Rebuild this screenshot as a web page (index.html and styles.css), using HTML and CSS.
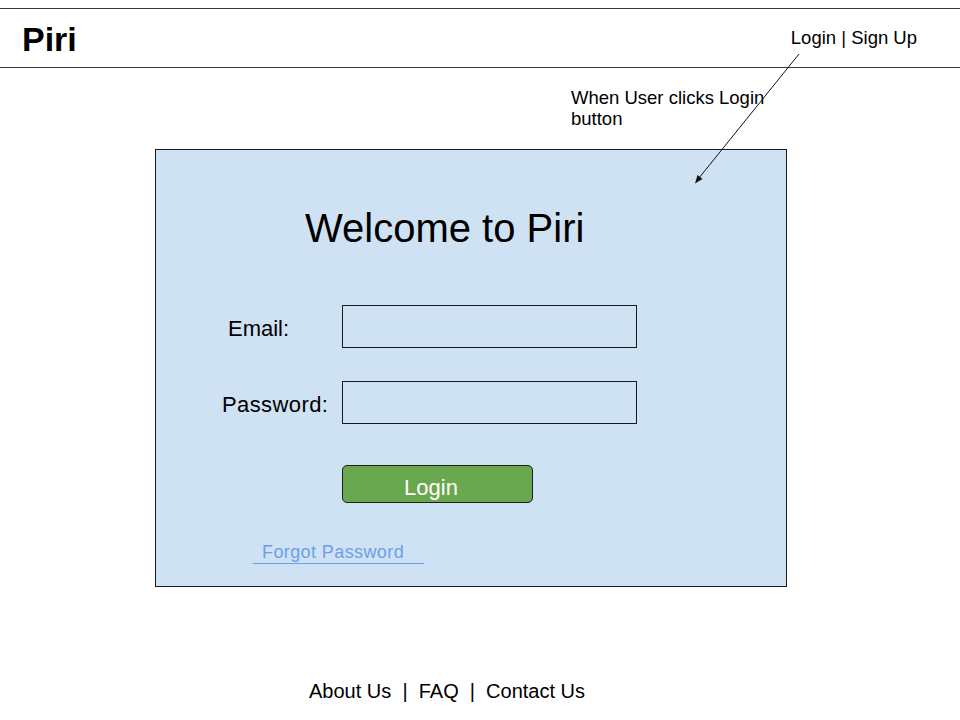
FILE: index.html
```html
<!DOCTYPE html>
<html lang="en">
<head>
<meta charset="utf-8">
<title>Piri - Login</title>
<link rel="stylesheet" href="styles.css">
</head>
<body>
<header class="topbar">
  <div class="brand">Piri</div>
  <nav class="auth-links">Login | Sign Up</nav>
</header>

<p class="annotation">When User clicks Login<br>button</p>

<main class="panel">
  <h1 class="panel-title">Welcome to Piri</h1>
  <form class="login-form">
    <label class="field-label field-label--email" for="email">Email:</label>
    <input class="field-input" id="email" type="email">
    <label class="field-label field-label--password" for="password">Password:</label>
    <input class="field-input" id="password" type="password">
    <button class="login-button" type="button">Login</button>
  </form>
  <a class="forgot-link" href="#">Forgot Password</a>
</main>

<footer class="site-footer">About Us  |  FAQ  |  Contact Us</footer>

<svg class="annotation-arrow" width="960" height="720" viewBox="0 0 960 720" aria-hidden="true">
  <line x1="799" y1="54" x2="699" y2="178" stroke="#111" stroke-width="1"/>
  <polygon points="695,183.5 702.5,179 697.5,175" fill="#111"/>
</svg>
</body>
</html>
```

FILE: styles.css
```css
* {
  box-sizing: border-box;
}

html, body {
  margin: 0;
  padding: 0;
  background: #ffffff;
}

body {
  position: relative;
  width: 960px;
  min-height: 720px;
  font-family: "Liberation Sans", Arial, sans-serif;
  color: #000;
}

.topbar {
  margin-top: 8px;
  height: 60px;
  border-top: 1px solid #3a3a3a;
  border-bottom: 1px solid #3a3a3a;
  display: flex;
  align-items: flex-start;
}

.brand {
  padding-left: 22px;
  padding-top: 10px;
  font-size: 34px;
  line-height: 40px;
  font-weight: bold;
}

.auth-links {
  margin-left: auto;
  padding-right: 43px;
  margin-top: 18px;
  font-size: 18.5px;
  line-height: 21px;
}

.annotation {
  margin: 20px 0 0 571px;
  font-size: 18.5px;
  line-height: 20.5px;
}

.panel {
  margin: 20px 0 0 155px;
  width: 632px;
  background: #cfe2f3;
  border: 1px solid #1a1a1a;
  padding: 55px 0 22px 0;
}

.panel-title {
  margin: 0 0 0 149px;
  font-size: 40px;
  line-height: 46px;
  font-weight: normal;
}

.login-form {
  margin-top: 54px;
  display: grid;
  grid-template-columns: 186px 295px;
  row-gap: 33px;
}

.field-label {
  height: 43px;
  padding-top: 12px;
  font-size: 22px;
  line-height: 24px;
}

.field-label--email {
  padding-left: 72px;
}

.field-label--password {
  padding-left: 66px;
  letter-spacing: 0.4px;
}

.field-input {
  height: 43px;
  width: 295px;
  margin: 0;
  border: 1px solid #1a1a1a;
  background: transparent;
  border-radius: 0;
}

.login-button {
  grid-column: 2;
  margin-top: 8px;
  width: 191px;
  height: 38px;
  padding: 7px 13px 0 0;
  border: 1px solid #1f1f1f;
  border-radius: 5px;
  background: #6aa84f;
  color: #fff;
  font-family: "Liberation Sans", Arial, sans-serif;
  font-size: 22px;
  line-height: 28px;
  text-align: center;
}

.forgot-link {
  display: block;
  margin: 40px 0 0 97px;
  width: 171px;
  padding: 0 0 2px 9px;
  border-bottom: 1px solid #6d9eeb;
  color: #6d9eeb;
  text-decoration: none;
  font-size: 18px;
  line-height: 18px;
  letter-spacing: 0.4px;
}

.site-footer {
  margin-top: 93px;
  padding-left: 309px;
  font-size: 20px;
  line-height: 23px;
  white-space: pre;
}

.annotation-arrow {
  position: absolute;
  left: 0;
  top: 0;
  pointer-events: none;
}
```
